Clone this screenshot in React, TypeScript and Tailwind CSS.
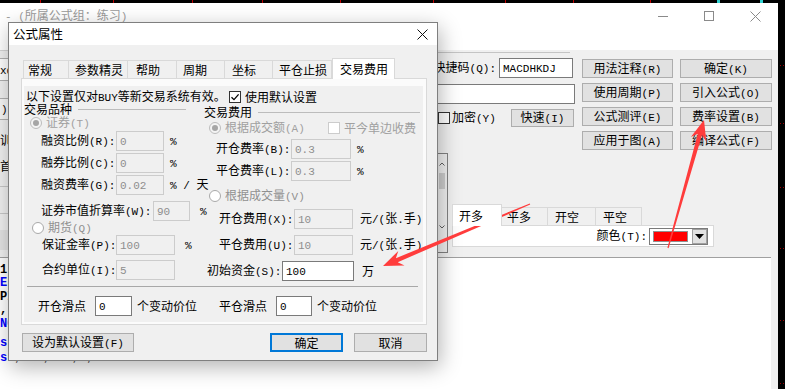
import React from "react";

function T({ s, className = "" }: { s: string; className?: string }) {
  const parts = s.split(/([\x20-\x7e]+)/).filter((p) => p !== "");
  return (
    <span className={`whitespace-pre ${className}`}>
      {parts.map((p, i) =>
        /^[\x20-\x7e]+$/.test(p) ? (
          <span key={i} className="font-['Liberation_Mono',monospace] text-[11px]">
            {p}
          </span>
        ) : (
          <span key={i}>{p}</span>
        )
      )}
    </span>
  );
}

function Field({ v, cls, on = false }: { v: string; cls: string; on?: boolean }) {
  return (
    <div
      className={`h-full shrink-0 flex items-center pl-[3px] border ${
        on ? "bg-white border-[#7a7a7a] text-black" : "bg-[#f0f0f0] border-[#cccccc] text-[#8e8e8e]"
      } ${cls}`}
    >
      <T s={v} />
    </div>
  );
}

function Radio({ checked = false }: { checked?: boolean }) {
  return (
    <span
      className={`w-[12px] h-[12px] rounded-full border shrink-0 flex items-center justify-center ${
        checked ? "border-[#bdbdbd] bg-[#f4f4f4]" : "border-[#a9a9a9] bg-white"
      }`}
    >
      {checked && <span className="w-[6px] h-[6px] rounded-full bg-[#a6a6a6]" />}
    </span>
  );
}

function Check({ checked = false, disabled = false }: { checked?: boolean; disabled?: boolean }) {
  return (
    <span
      className={`w-[12px] h-[12px] border shrink-0 flex items-center justify-center bg-white ${
        disabled ? "border-[#cccccc]" : "border-[#333333]"
      }`}
    >
      {checked && (
        <svg width="10" height="10" viewBox="0 0 10 10">
          <path d="M1.5 5.2 L4 7.6 L8.6 2.4" fill="none" stroke="#000" strokeWidth="1.3" />
        </svg>
      )}
    </span>
  );
}

function BgBtn({ label }: { label: string }) {
  return (
    <div className="h-[19px] w-full flex items-center justify-center bg-[#e1e1e1] border border-[#adadad]">
      <T s={label} />
    </div>
  );
}

function DlgBtn({ label, cls, def = false }: { label: string; cls: string; def?: boolean }) {
  return (
    <div
      className={`h-[19px] shrink-0 flex items-center justify-center bg-[#e1e1e1] ${
        def ? "border-2 border-[#0078d7]" : "border border-[#adadad]"
      } ${cls}`}
    >
      <T s={label} />
    </div>
  );
}

function TopStrip() {
  const red = [40, 113, 192, 262, 340, 433, 505, 573, 650];
  const cyan = [717, 760];
  return (
    <svg width="785" height="3" className="block shrink-0">
      <rect width="785" height="3" fill="#000" />
      {red.map((x) => (
        <rect key={x} x={x} y="0" width="1" height="3" fill="#c00000" />
      ))}
      {cyan.map((x) => (
        <rect key={x} x={x} y="0" width="3" height="3" fill="#2fd0d0" />
      ))}
    </svg>
  );
}

function RightStrip() {
  const ys = [62, 120, 184, 245, 317, 380];
  return (
    <svg width="7" height="386" className="block shrink-0">
      <rect width="7" height="386" fill="#000" />
      {ys.map((y) => (
        <g key={y}>
          <rect x="2" y={y} width="1" height="1" fill="#a00000" />
          <rect x="5" y={y} width="1" height="1" fill="#a00000" />
        </g>
      ))}
    </svg>
  );
}

function BgWindow() {
  return (
    <div className="w-[778px] h-full flex flex-col bg-[#f0f0f0]">
      {/* title bar */}
      <div className="h-[47px] shrink-0 bg-white flex items-start justify-between">
        <div className="pl-[5px] pt-[5px] text-[#9a9a9a]">
          <T s="- (所属公式组：练习)" />
        </div>
        <div className="flex h-[26px]">
          <div className="w-[46px] flex items-center justify-center">
            <div className="w-[10px] h-px bg-[#8a8a8a]" />
          </div>
          <div className="w-[46px] flex items-center justify-center">
            <div className="w-[10px] h-[10px] border border-[#8a8a8a]" />
          </div>
          <div className="w-[46px] flex items-center justify-center">
            <svg width="11" height="11" viewBox="0 0 11 11">
              <path d="M0.5 0.5 L10.5 10.5 M10.5 0.5 L0.5 10.5" stroke="#8a8a8a" strokeWidth="1" />
            </svg>
          </div>
        </div>
      </div>

      {/* upper body */}
      <div className="h-[207px] shrink-0 flex">
        {/* left column (mostly hidden by dialog) */}
        <div className="w-[437px] shrink-0 flex flex-col">
          <div className="h-px bg-[#d4d4d4]" />
          <div className="mt-[7px] h-[23px] border-y border-[#b0b0b0] bg-white flex items-center pl-[0px]">
            <T s="xd" />
          </div>
          <div className="mt-[17px] h-[22px] border-y border-[#b0b0b0] bg-[#f7f7f7] flex items-center pl-[1px]">
            <T s=")" />
          </div>
          <div className="mt-[10px] h-[20px] flex items-center">
            <span>训</span>
          </div>
          <div className="mt-[8px] h-[16px] flex items-center">
            <span>首</span>
          </div>
          <div className="mt-[12px] h-px bg-[#c8c8c8]" />
          <div className="mt-[26px] h-px bg-[#c8c8c8]" />
          <div className="mt-[16px] h-[20px] bg-[#e3e3e3]" />
        </div>

        {/* right area */}
        <div className="w-[341px] shrink-0 flex flex-col">
          <div className="h-[100px] shrink-0 flex">
            <div className="w-[141px] shrink-0 flex flex-col">
              <div className="mt-[2px] w-[133px] h-px bg-[#c4c4c4]" />
              <div className="mt-[5px] h-[20px] flex items-center pr-[5px]">
                <div className="flex-1 flex justify-end min-w-0">
                  <span className="shrink-0">
                    <T s="快捷码(Q):" />
                  </span>
                </div>
                <Field on v="MACDHKDJ" cls="ml-[3px] w-[74px]" />
              </div>
              <div className="mt-[6px] h-[20px]">
                <Field on v="" cls="w-[138px]" />
              </div>
              <div className="mt-[5px] h-[18px] flex items-center">
                <span className="ml-[1px]">
                  <Check />
                </span>
                <span className="ml-[2px]">
                  <T s="加密(Y)" />
                </span>
                <div className="ml-auto mr-[4px] w-[63px] h-[18px] flex items-center justify-center bg-[#e1e1e1] border border-[#adadad]">
                  <T s="快速(I)" />
                </div>
              </div>
            </div>
            <div className="ml-[4px] w-[91px] shrink-0 flex flex-col gap-[5px] pt-[9px]">
              <BgBtn label="用法注释(R)" />
              <BgBtn label="使用周期(P)" />
              <BgBtn label="公式测评(E)" />
              <BgBtn label="应用于图(A)" />
            </div>
            <div className="ml-[7px] w-[92px] shrink-0 flex flex-col gap-[5px] pt-[9px]">
              <BgBtn label="确定(K)" />
              <BgBtn label="引入公式(O)" />
              <BgBtn label="费率设置(B)" />
              <BgBtn label="编译公式(F)" />
            </div>
          </div>

          <div className="flex-1 flex">
            {/* scrollbar stub */}
            <div className="mt-[3px] w-[11px] h-[100px] shrink-0 border-y border-r border-[#828282] bg-[#f0f0f0] flex flex-col items-center">
              <svg width="6" height="4" viewBox="0 0 6 4" className="mt-[8px]">
                <path d="M0.5 3.5 L3 1 L5.5 3.5" fill="none" stroke="#606060" />
              </svg>
              <div className="mt-[7px] w-[6px] h-[16px] bg-[#cdcdcd]" />
              <svg width="6" height="4" viewBox="0 0 6 4" className="mt-[36px]">
                <path d="M0.5 0.5 L3 3 L5.5 0.5" fill="none" stroke="#606060" />
              </svg>
            </div>
            {/* tabs */}
            <div className="ml-[4px] mt-[54px] w-[262px] flex flex-col">
              <div className="h-[21px] flex items-end">
                <div className="relative z-10 -mb-px w-[50px] h-[22px] bg-white border border-b-0 border-[#d9d9d9] pl-[6px] flex items-center">
                  开多
                </div>
                <div className="w-[46px] h-[18px] bg-[#f0f0f0] border-t border-r border-[#d9d9d9] pl-[5px] flex items-center">
                  平多
                </div>
                <div className="w-[48px] h-[18px] bg-[#f0f0f0] border-t border-r border-[#d9d9d9] pl-[7px] flex items-center">
                  开空
                </div>
                <div className="w-[46px] h-[18px] bg-[#f0f0f0] border-t border-r border-[#d9d9d9] pl-[7px] flex items-center">
                  平空
                </div>
              </div>
              <div className="h-[22px] bg-white border border-[#d9d9d9] flex items-center justify-end pr-[5px]">
                <T s="颜色(T):" />
                <div className="ml-[2px] w-[59px] h-[17px] border border-[#7a7a7a] bg-white flex items-center pl-[3px]">
                  <div className="w-[35px] h-[11px] bg-[#ff0000] border border-[#909090]" />
                  <div className="ml-[4px] w-[15px] h-[15px] bg-[#e1e1e1] border border-[#a0a0a0] flex items-center justify-center">
                    <svg width="9" height="5" viewBox="0 0 9 5">
                      <path d="M0 0 L9 0 L4.5 5 Z" fill="#000" />
                    </svg>
                  </div>
                </div>
              </div>
            </div>
          </div>
        </div>
      </div>

      {/* editor */}
      <div className="flex-1 mr-[7px] bg-white border-t border-[#a0a0a0] pt-[6px] font-['Liberation_Mono',monospace] text-[12px] leading-[13.4px] font-bold">
        <div>1,</div>
        <div>
          <span className="text-[#0000ff]">E</span>-
        </div>
        <div>PI</div>
        <div>, -</div>
        <div className="text-[#0000ff]">NC</div>
        <div className="mt-[5px] leading-[14px] text-[#0000ff]">s</div>
        <div className="mt-[1px] leading-[14px]">
          <span className="text-[#0000ff]">s</span>
          <span className="font-normal text-[#555]"> , / , / ,  ,</span>
        </div>
      </div>
    </div>
  );
}

function Dialog() {
  return (
    <div className="absolute left-[8px] top-[22px] w-[430px] h-[339px] border border-[#7f7f7f] bg-[#f0f0f0] shadow-[2px_6px_20px_rgba(0,0,0,0.3)] flex flex-col">
      {/* title */}
      <div className="h-[22px] shrink-0 bg-white flex items-center justify-between pl-[4px] pr-[9px]">
        <span className="text-[12.5px]">公式属性</span>
        <svg width="11" height="11" viewBox="0 0 11 11">
          <path d="M0.5 0.5 L10.5 10.5 M10.5 0.5 L0.5 10.5" stroke="#111" strokeWidth="1" />
        </svg>
      </div>

      {/* tabs */}
      <div className="mt-[13px] h-[20px] shrink-0 pl-[14px] flex items-end">
        <div className="w-[46px] h-[18px] border-t border-l border-r border-[#d9d9d9] pl-[4px] flex items-center">常规</div>
        <div className="w-[59px] h-[18px] border-t border-r border-[#d9d9d9] pl-[6px] flex items-center">参数精灵</div>
        <div className="w-[49px] h-[18px] border-t border-r border-[#d9d9d9] pl-[8px] flex items-center">帮助</div>
        <div className="w-[48px] h-[18px] border-t border-r border-[#d9d9d9] pl-[6px] flex items-center">周期</div>
        <div className="w-[48px] h-[18px] border-t border-r border-[#d9d9d9] pl-[7px] flex items-center">坐标</div>
        <div className="w-[59px] h-[18px] border-t border-r border-[#d9d9d9] pl-[6px] flex items-center">平仓止损</div>
        <div className="relative z-10 -mb-px w-[63px] h-[21px] bg-white border border-b-0 border-[#d9d9d9] pl-[7px] flex items-center">
          交易费用
        </div>
      </div>

      {/* panel */}
      <div className="ml-[12px] w-[406px] h-[247px] shrink-0 border border-[#d9d9d9] bg-[#fbfbfb] pt-[7px] pl-[2px] pr-[3px] pb-[2px]">
        <div className="h-full bg-[#f0f0f0] flex flex-col leading-[12px]">
          {/* info row */}
          <div className="pt-[5px] h-[17px] flex items-center">
            <div className="w-[205px] pl-[2px] shrink-0">
              <T s="以下设置仅对BUY等新交易系统有效。" />
            </div>
            <Check checked />
            <span className="ml-[4px]">使用默认设置</span>
          </div>

          {/* columns */}
          <div className="h-[178px] flex">
            {/* left */}
            <div className="w-[180px] shrink-0 flex flex-col">
              <div className="h-[12px] flex items-center">
                <span className="shrink-0">交易品种</span>
                <div className="ml-[6px] w-[108px] h-px bg-[#bcbcbc]" />
              </div>
              <div className="mt-[2px] h-[12px] flex items-center pl-[6px] gap-[4px]">
                <Radio checked />
                <T s="证券(T)" className="text-[#a0a0a0]" />
              </div>
              <div className="mt-[2px] h-[20px] flex items-center pl-[17px]">
                <div className="w-[75px] shrink-0">
                  <T s="融资比例(R):" />
                </div>
                <Field v="0" cls="w-[48px]" />
                <span className="ml-[6px]">
                  <T s="%" />
                </span>
              </div>
              <div className="mt-[2px] h-[20px] flex items-center pl-[17px]">
                <div className="w-[75px] shrink-0">
                  <T s="融券比例(C):" />
                </div>
                <Field v="0" cls="w-[48px]" />
                <span className="ml-[6px]">
                  <T s="%" />
                </span>
              </div>
              <div className="mt-[2px] h-[20px] flex items-center pl-[17px]">
                <div className="w-[75px] shrink-0">
                  <T s="融资费率(G):" />
                </div>
                <Field v="0.02" cls="w-[48px]" />
                <span className="ml-[6px]">
                  <T s="% / 天" />
                </span>
              </div>
              <div className="mt-[6px] h-[20px] flex items-center pl-[17px]">
                <div className="w-[112px] shrink-0">
                  <T s="证券市值折算率(W):" />
                </div>
                <Field v="90" cls="w-[37px]" />
                <span className="ml-[10px]">
                  <T s="%" />
                </span>
              </div>
              <div className="mt-[1px] h-[12px] flex items-center pl-[8px] gap-[4px]">
                <Radio />
                <T s="期货(Q)" className="text-[#909090]" />
              </div>
              <div className="mt-[1px] h-[20px] flex items-center pl-[18px]">
                <div className="w-[74px] shrink-0">
                  <T s="保证金率(P):" />
                </div>
                <Field v="100" cls="w-[59px]" />
                <span className="ml-[10px]">
                  <T s="%" />
                </span>
              </div>
              <div className="mt-[5px] h-[20px] flex items-center pl-[18px]">
                <div className="w-[74px] shrink-0">
                  <T s="合约单位(I):" />
                </div>
                <Field v="5" cls="w-[59px]" />
              </div>
            </div>

            {/* right */}
            <div className="w-[219px] shrink-0 flex flex-col">
              <div className="mt-[3px] h-[12px] flex items-center">
                <span className="shrink-0">交易费用</span>
                <div className="ml-[6px] w-[162px] h-px bg-[#bcbcbc]" />
              </div>
              <div className="mt-[4px] h-[12px] flex items-center pl-[5px]">
                <div className="w-[119px] shrink-0 flex items-center gap-[4px]">
                  <Radio checked />
                  <T s="根据成交额(A)" className="text-[#a0a0a0]" />
                </div>
                <Check disabled />
                <span className="ml-[4px] text-[#a0a0a0]">平今单边收费</span>
              </div>
              <div className="mt-[5px] h-[20px] flex items-center pl-[12px]">
                <div className="w-[75px] shrink-0">
                  <T s="开仓费率(B):" />
                </div>
                <Field v="0.3" cls="w-[60px]" />
                <span className="ml-[6px]">
                  <T s="%" />
                </span>
              </div>
              <div className="mt-[2px] h-[20px] flex items-center pl-[12px]">
                <div className="w-[75px] shrink-0">
                  <T s="平仓费率(L):" />
                </div>
                <Field v="0.3" cls="w-[60px]" />
                <span className="ml-[6px]">
                  <T s="%" />
                </span>
              </div>
              <div className="mt-[9px] h-[12px] flex items-center pl-[5px] gap-[4px]">
                <Radio />
                <T s="根据成交量(V)" className="text-[#909090]" />
              </div>
              <div className="mt-[7px] h-[20px] flex items-center pl-[15px]">
                <div className="w-[75px] shrink-0">
                  <T s="开仓费用(X):" />
                </div>
                <Field v="10" cls="w-[59px]" />
                <span className="ml-[7px]">
                  <T s="元/(张.手)" />
                </span>
              </div>
              <div className="mt-[6px] h-[20px] flex items-center pl-[15px]">
                <div className="w-[75px] shrink-0">
                  <T s="平仓费用(U):" />
                </div>
                <Field v="10" cls="w-[59px]" />
                <span className="ml-[7px]">
                  <T s="元/(张.手)" />
                </span>
              </div>
              <div className="mt-[6px] h-[20px] flex items-center pl-[3px]">
                <div className="w-[75px] shrink-0">
                  <T s="初始资金(S):" />
                </div>
                <Field on v="100" cls="w-[72px]" />
                <span className="ml-[8px]">万</span>
              </div>
            </div>
          </div>

          {/* separator */}
          <div className="mt-[5px] ml-[3px] w-[391px] h-px bg-[#a8a8a8]" />

          {/* slippage row */}
          <div className="mt-[9px] h-[20px] flex items-center pl-[14px]">
            <div className="w-[57px] shrink-0">开仓滑点</div>
            <Field on v="0" cls="w-[37px]" />
            <span className="ml-[5px] w-[60px] shrink-0">个变动价位</span>
            <div className="ml-[22px] w-[57px] shrink-0">平仓滑点</div>
            <Field on v="0" cls="w-[36px]" />
            <span className="ml-[5px]">个变动价位</span>
          </div>
        </div>
      </div>

      {/* buttons */}
      <div className="mt-[8px] h-[19px] shrink-0 flex pl-[13px]">
        <DlgBtn label="设为默认设置(F)" cls="w-[112px]" />
        <DlgBtn label="确定" cls="ml-[136px] w-[73px]" def />
        <DlgBtn label="取消" cls="ml-[11px] w-[73px]" />
      </div>
    </div>
  );
}

function Arrows() {
  return (
    <svg width="785" height="389" className="absolute left-0 top-0 pointer-events-none">
      <polygon
        points="529.8,203.4 395.9,258.2 398.3,250.9 383,266 404.5,265.6 397.7,262.2 530.2,204.6"
        fill="#ff3c3c"
      />
      <polygon
        points="667.4,247.8 697.8,133.8 690.9,137.1 704,120 706.3,141.4 702.0,135.0 668.6,248.2"
        fill="#ff3c3c"
      />
    </svg>
  );
}

export default function App() {
  return (
    <div className="relative w-[785px] h-[389px] overflow-hidden bg-black font-['Noto_Sans_CJK_SC',sans-serif] text-[12px] leading-[14px] text-black">
      <div className="flex flex-col h-full">
        <TopStrip />
        <div className="flex flex-1 min-h-0">
          <BgWindow />
          <RightStrip />
        </div>
      </div>
      <Dialog />
      <Arrows />
    </div>
  );
}
